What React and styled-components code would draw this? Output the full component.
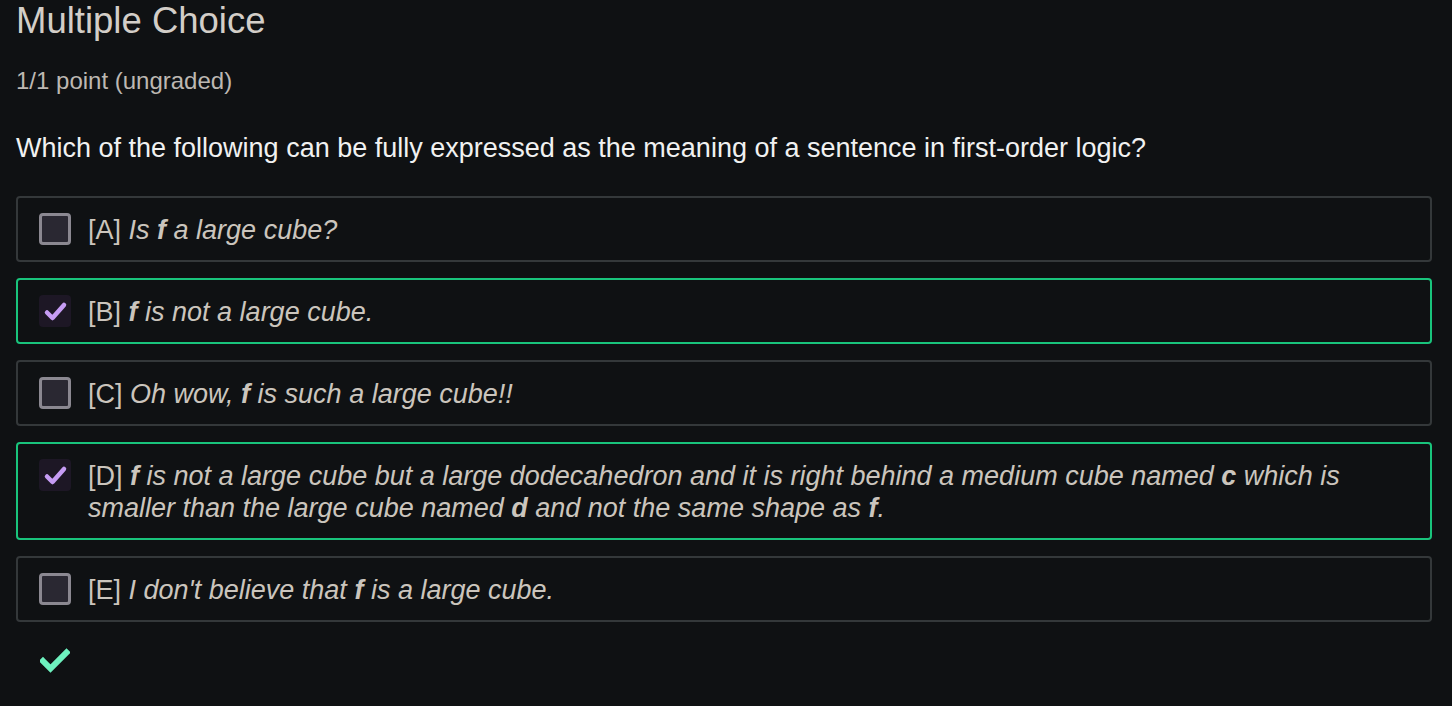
import React from 'react';
import styled, { createGlobalStyle } from 'styled-components';

const GlobalStyle = createGlobalStyle`
  html, body {
    margin: 0;
    padding: 0;
    background: #0f1113;
  }
  body {
    font-family: "Liberation Sans", Arial, sans-serif;
  }
`;

const Page = styled.div`
  padding: 0 20px 20px 16px;
  min-height: 706px;
  box-sizing: border-box;
  background: #0f1113;
`;

const Title = styled.h1`
  margin: 0;
  font-size: 36.5px;
  font-weight: 400;
  line-height: 42px;
  color: #d3cec8;
`;

const Points = styled.div`
  margin-top: 25px;
  font-size: 24px;
  color: #bdb8b2;
`;

const Question = styled.p`
  margin: 38px 0 32px;
  font-size: 27px;
  color: #f1f1f1;
`;

const Options = styled.div`
  display: flex;
  flex-direction: column;
  gap: 16px;
`;

const Option = styled.label`
  display: flex;
  align-items: flex-start;
  gap: 17px;
  padding: 16px 20px 14px 21px;
  border: 2px solid ${p => (p.$selected ? '#19c47c' : '#34383a')};
  border-radius: 4px;
  font-size: 27px;
  line-height: 32px;
  color: #cbc5bd;
`;

const Box = styled.span`
  flex: none;
  width: 32px;
  height: 32px;
  margin-top: -1px;
  box-sizing: border-box;
  border-radius: 4px;
  display: flex;
  align-items: center;
  justify-content: center;
  background: ${p => (p.$checked ? '#1d1725' : '#2a2832')};
  border: ${p => (p.$checked ? 'none' : '3px solid #8b8891')};
`;

const Text = styled.span`
  font-style: italic;
  b {
    font-weight: 700;
  }
`;

const Tag = styled.span`
  font-style: normal;
`;

const Result = styled.div`
  margin-top: 26px;
  padding-left: 24px;
  display: flex;
`;

const Check = () => (
  <svg width="32" height="32" viewBox="0 0 32 32">
    <path d="M8 17.5 L13.5 23 L25 10" fill="none" stroke="#c69cf4" strokeWidth="4.5" strokeLinecap="round" strokeLinejoin="round" />
  </svg>
);

const BigCheck = () => (
  <svg width="30" height="25" viewBox="0 0 30 25">
    <path d="M3 13 L10.5 20.5 L26.5 4.5" fill="none" stroke="#6ef2bf" strokeWidth="6" strokeLinecap="square" strokeLinejoin="miter" />
  </svg>
);

const options = [
  { tag: 'A', checked: false, body: <>Is <b>f</b> a large cube?</> },
  { tag: 'B', checked: true, body: <><b>f</b> is not a large cube.</> },
  { tag: 'C', checked: false, body: <>Oh wow, <b>f</b> is such a large cube!!</> },
  {
    tag: 'D',
    checked: true,
    body: (
      <>
        <b>f</b> is not a large cube but a large dodecahedron and it is right behind a medium cube named <b>c</b> which is smaller than the large cube named <b>d</b> and not the same shape as <b>f</b>.
      </>
    ),
  },
  { tag: 'E', checked: false, body: <>I don't believe that <b>f</b> is a large cube.</> },
];

export default function App() {
  return (
    <Page>
      <GlobalStyle />
      <Title>Multiple Choice</Title>
      <Points>1/1 point (ungraded)</Points>
      <Question>Which of the following can be fully expressed as the meaning of a sentence in first-order logic?</Question>
      <Options>
        {options.map(o => (
          <Option key={o.tag} $selected={o.checked}>
            <Box $checked={o.checked}>{o.checked && <Check />}</Box>
            <Text>
              <Tag>[{o.tag}]</Tag> {o.body}
            </Text>
          </Option>
        ))}
      </Options>
      <Result>
        <BigCheck />
      </Result>
    </Page>
  );
}
